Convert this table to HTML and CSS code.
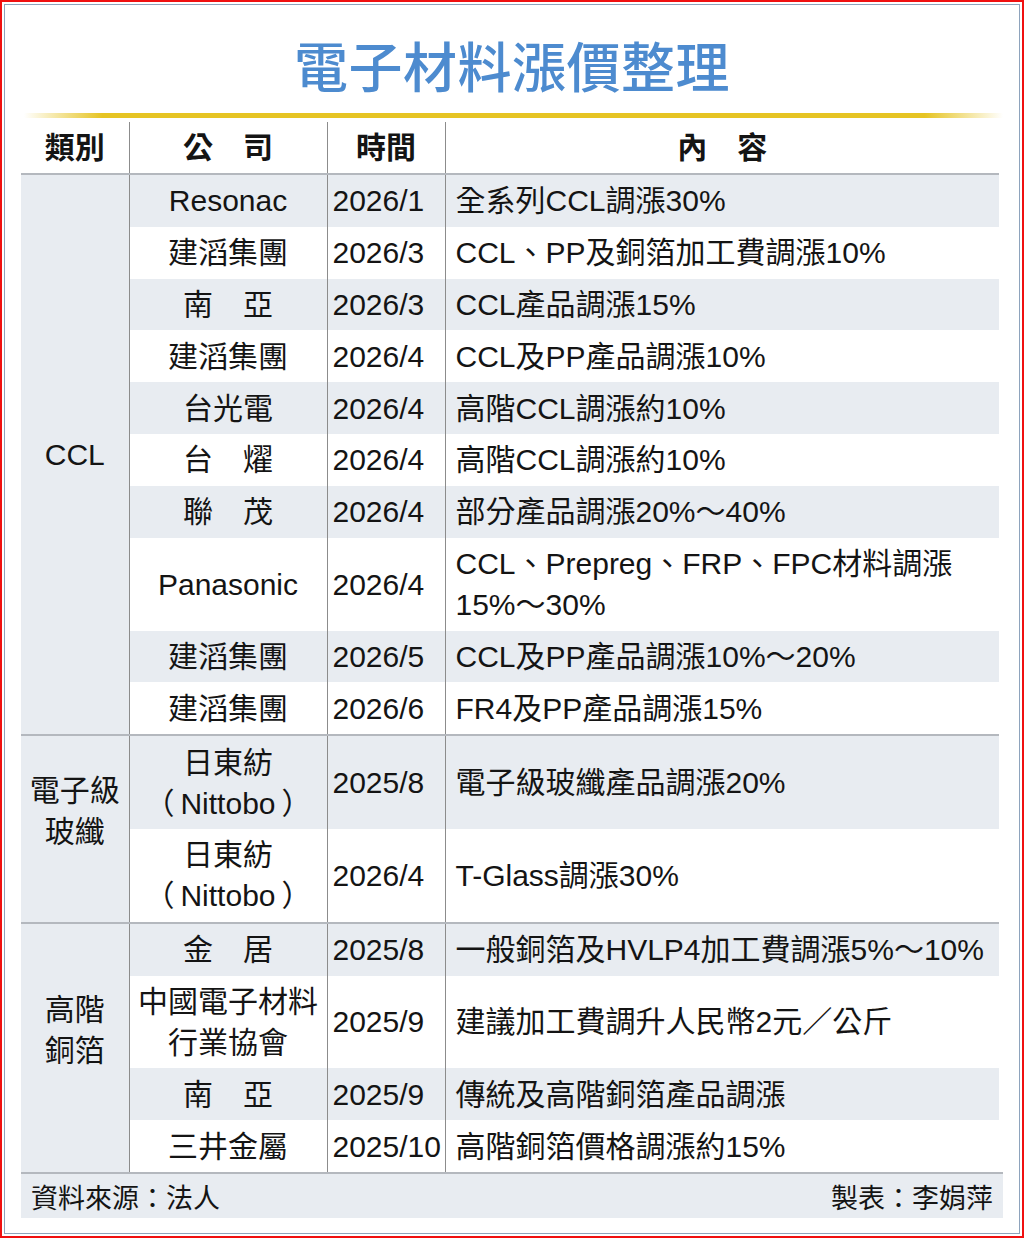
FILE: index.html
```html
<!DOCTYPE html>
<html lang="zh-Hant">
<head>
<meta charset="utf-8">
<title>電子材料漲價整理</title>
<link rel="stylesheet" href="styles.css">
</head>
<body>
<div class="frame">
  <div class="inner">
    <h1 class="title">電子材料漲價整理</h1>
    <div class="rule"></div>
    <table class="grid">
      <colgroup>
        <col class="c-cat"><col class="c-co"><col class="c-date"><col class="c-desc">
      </colgroup>
      <thead>
        <tr>
          <th>類別</th>
          <th>公　司</th>
          <th>時間</th>
          <th>內　容</th>
        </tr>
      </thead>
      <tbody>
        <tr class="alt section">
          <td class="cat" rowspan="10">CCL</td>
          <td class="co">Resonac</td><td class="date">2026/1</td><td class="desc">全系列CCL調漲30%</td>
        </tr>
        <tr>
          <td class="co">建滔集團</td><td class="date">2026/3</td><td class="desc">CCL、PP及銅箔加工費調漲10%</td>
        </tr>
        <tr class="alt">
          <td class="co">南　亞</td><td class="date">2026/3</td><td class="desc">CCL產品調漲15%</td>
        </tr>
        <tr>
          <td class="co">建滔集團</td><td class="date">2026/4</td><td class="desc">CCL及PP產品調漲10%</td>
        </tr>
        <tr class="alt">
          <td class="co">台光電</td><td class="date">2026/4</td><td class="desc">高階CCL調漲約10%</td>
        </tr>
        <tr>
          <td class="co">台　燿</td><td class="date">2026/4</td><td class="desc">高階CCL調漲約10%</td>
        </tr>
        <tr class="alt">
          <td class="co">聯　茂</td><td class="date">2026/4</td><td class="desc">部分產品調漲20%～40%</td>
        </tr>
        <tr>
          <td class="co">Panasonic</td><td class="date">2026/4</td><td class="desc">CCL、Prepreg、FRP、FPC材料調漲<br>15%～30%</td>
        </tr>
        <tr class="alt">
          <td class="co">建滔集團</td><td class="date">2026/5</td><td class="desc">CCL及PP產品調漲10%～20%</td>
        </tr>
        <tr>
          <td class="co">建滔集團</td><td class="date">2026/6</td><td class="desc">FR4及PP產品調漲15%</td>
        </tr>

        <tr class="alt section">
          <td class="cat cat-2" rowspan="2">電子級<br>玻纖</td>
          <td class="co">日東紡<br>（&thinsp;Nittobo&thinsp;）</td><td class="date">2025/8</td><td class="desc">電子級玻纖產品調漲20%</td>
        </tr>
        <tr>
          <td class="co">日東紡<br>（&thinsp;Nittobo&thinsp;）</td><td class="date">2026/4</td><td class="desc">T-Glass調漲30%</td>
        </tr>

        <tr class="alt section">
          <td class="cat cat-2" rowspan="4">高階<br>銅箔</td>
          <td class="co">金　居</td><td class="date">2025/8</td><td class="desc">一般銅箔及HVLP4加工費調漲5%～10%</td>
        </tr>
        <tr>
          <td class="co">中國電子材料<br>行業協會</td><td class="date">2025/9</td><td class="desc">建議加工費調升人民幣2元／公斤</td>
        </tr>
        <tr class="alt">
          <td class="co">南　亞</td><td class="date">2025/9</td><td class="desc">傳統及高階銅箔產品調漲</td>
        </tr>
        <tr>
          <td class="co">三井金屬</td><td class="date">2025/10</td><td class="desc">高階銅箔價格調漲約15%</td>
        </tr>
      </tbody>
    </table>
    <div class="footer">
      <span>資料來源：法人</span>
      <span>製表：李娟萍</span>
    </div>
  </div>
</div>
</body>
</html>
```

FILE: styles.css
```css
html, body {
  margin: 0;
  padding: 0;
  background: #ffffff;
}

body {
  font-family: "Liberation Sans", "Noto Sans CJK TC", "Noto Sans CJK SC", sans-serif;
  color: #141414;
  text-spacing-trim: space-all;
}

.frame {
  width: 1024px;
  height: 1238px;
  box-sizing: border-box;
  border: 2px solid #f01010;
  padding: 2px;
  background: #ffffff;
}

.inner {
  height: 100%;
  box-sizing: border-box;
  border: 1px solid #8ea3bc;
  padding: 0 16px;
}

.title {
  margin: 0;
  padding-top: 28px;
  font-family: "Noto Sans CJK TC", sans-serif;
  font-size: 54px;
  line-height: 64px;
  font-weight: 500;
  color: #4d8bcf;
  text-align: center;
  letter-spacing: 0.5px;
}

.rule {
  height: 5px;
  margin: 16px 0 0 3px;
  background: linear-gradient(to right,
    rgba(230, 196, 35, 0) 0%,
    #e6c423 8%,
    #e6c423 92%,
    rgba(230, 196, 35, 0) 100%);
}

.grid {
  margin-top: 4px;
  width: 978px;
  table-layout: fixed;
  border-collapse: collapse;
  font-size: 30px;
  line-height: 41px;
}

.c-cat { width: 108px; }
.c-co { width: 198px; }
.c-date { width: 118px; }
.c-desc { width: 554px; }

.grid th {
  font-weight: 700;
  height: 51px;
  padding: 0;
  text-align: center;
  background: #ffffff;
  border-bottom: 2px solid #b4b8be;
  border-left: 1px solid #8c8c8c;
}

.grid th:first-child {
  border-left: none;
}

.grid td {
  padding: 5.42px 0;
  vertical-align: middle;
  border-left: 1px solid #8c8c8c;
  background: #ffffff;
}

.grid tr.alt td {
  background: #e8ecf1;
}

.grid tr.section td {
  border-top: 2px solid #b4b8be;
}

.grid td.cat {
  border-left: none;
  text-align: center;
  background: #e8ecf1;
}

.grid td.cat-2 {
  padding-bottom: 42px;
}

.co {
  text-align: center;
  white-space: nowrap;
}

.grid td.date {
  padding-left: 5px;
  text-align: left;
  white-space: nowrap;
}

.grid td.desc {
  padding-left: 10px;
  text-align: left;
  white-space: nowrap;
}

.footer {
  display: flex;
  justify-content: space-between;
  align-items: center;
  height: 44px;
  padding: 0 10px;
  border-top: 2px solid #b4b8be;
  background: #e8ecf1;
  font-size: 27px;
}
```
